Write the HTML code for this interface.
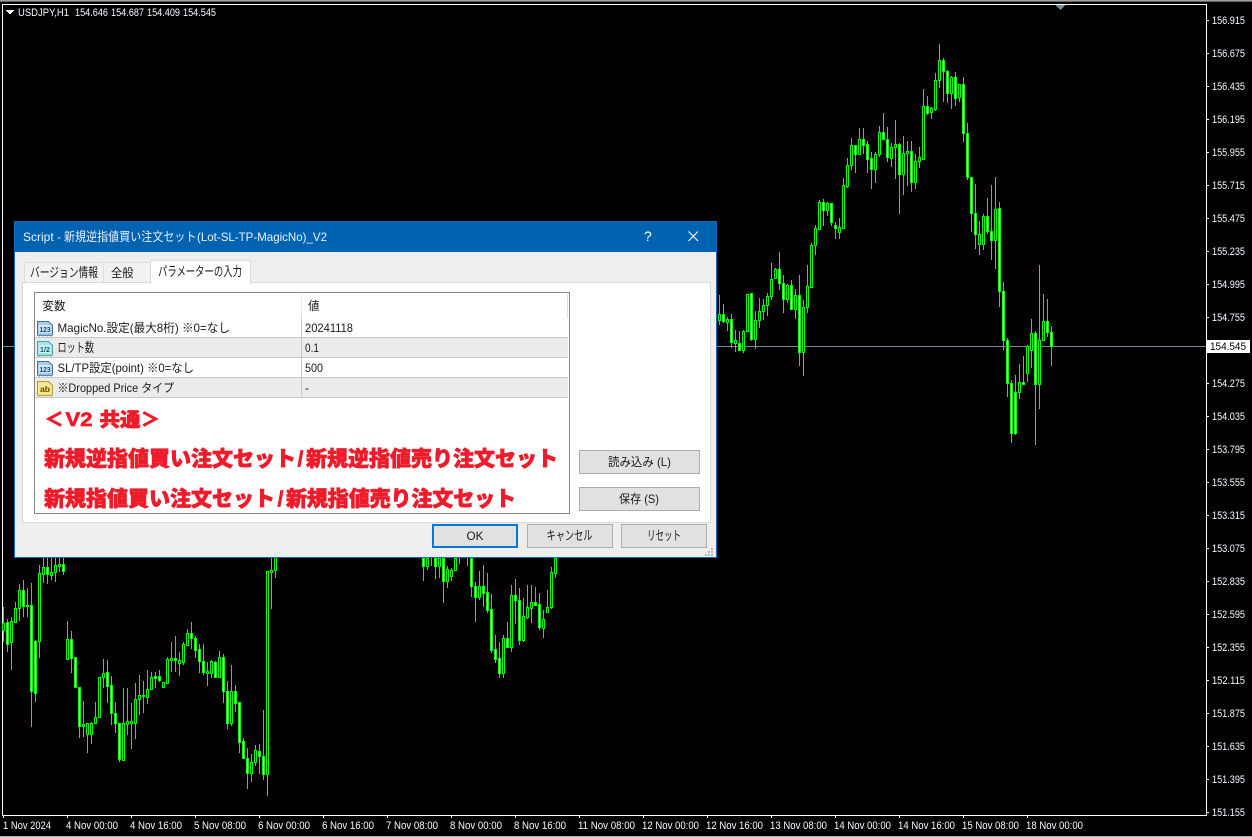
<!DOCTYPE html>
<html><head><meta charset="utf-8"><style>
html,body{margin:0;padding:0;background:#000;width:1252px;height:837px;overflow:hidden}
svg{position:absolute;left:0;top:0;display:block}
text{font-family:"Liberation Sans","Noto Sans CJK JP",sans-serif;white-space:pre}
.d{position:absolute;box-sizing:border-box}
.b{position:absolute;box-sizing:border-box;background:#e1e1e1;border:1px solid #adadad}
.t{font-size:12px;fill:#1a1a1a}
.k{font-size:13px;fill:#1a1a1a}
.a{font-size:11px;fill:#f8fbff}
.r{font-size:21px;font-weight:900;fill:#ee1c2b;stroke:#ee1c2b;stroke-width:.7px}
</style></head><body>
<svg width="1252" height="837" viewBox="0 0 1252 837">
<g shape-rendering="crispEdges">
<rect x="0" y="0" width="1252" height="1" fill="#a0a0a0"/><rect x="0" y="1" width="1252" height="1" fill="#666"/>
<rect x="0" y="836" width="1252" height="1" fill="#b0b0b0"/>
<rect x="2" y="4" width="1205" height="1" fill="#fff"/>
<rect x="2" y="4" width="1" height="812" fill="#fff"/>
<rect x="1206" y="4" width="1" height="812" fill="#fff"/>
<rect x="2" y="815" width="1205" height="1" fill="#fff"/>
<rect x="3" y="346" width="1203" height="1" fill="#778899"/>
<g id="ticks" fill="#fff"></g>
<g id="candles"></g>
<path d="M1056 5h9v1h-1v1h-1v1h-1v1h-1v1h-1v-1h-1v-1h-1v-1h-1v-1h-1z" fill="#778899"/>
<path d="M6 10h8v1h-1v1h-1v1h-1v1h-2v-1h-1v-1h-1v-1h-1z" fill="#fff"/>
<rect x="1207" y="340" width="43" height="13" fill="#fff"/>
</g>
<text class="a" x="18" y="16" textLength="51" lengthAdjust="spacingAndGlyphs">USDJPY,H1</text>
<text class="a" x="75" y="16" textLength="33" lengthAdjust="spacingAndGlyphs">154.646</text>
<text class="a" x="111" y="16" textLength="33" lengthAdjust="spacingAndGlyphs">154.687</text>
<text class="a" x="147" y="16" textLength="33" lengthAdjust="spacingAndGlyphs">154.409</text>
<text class="a" x="183" y="16" textLength="33" lengthAdjust="spacingAndGlyphs">154.545</text>
<g class="px">
<text class="a" x="1212" y="24" textLength="33" lengthAdjust="spacingAndGlyphs">156.915</text>
<text class="a" x="1212" y="57" textLength="33" lengthAdjust="spacingAndGlyphs">156.675</text>
<text class="a" x="1212" y="90" textLength="33" lengthAdjust="spacingAndGlyphs">156.435</text>
<text class="a" x="1212" y="123" textLength="33" lengthAdjust="spacingAndGlyphs">156.195</text>
<text class="a" x="1212" y="156" textLength="33" lengthAdjust="spacingAndGlyphs">155.955</text>
<text class="a" x="1212" y="189" textLength="33" lengthAdjust="spacingAndGlyphs">155.715</text>
<text class="a" x="1212" y="222" textLength="33" lengthAdjust="spacingAndGlyphs">155.475</text>
<text class="a" x="1212" y="255" textLength="33" lengthAdjust="spacingAndGlyphs">155.235</text>
<text class="a" x="1212" y="288" textLength="33" lengthAdjust="spacingAndGlyphs">154.995</text>
<text class="a" x="1212" y="321" textLength="33" lengthAdjust="spacingAndGlyphs">154.755</text>
<text class="a" x="1212" y="387" textLength="33" lengthAdjust="spacingAndGlyphs">154.275</text>
<text class="a" x="1212" y="420" textLength="33" lengthAdjust="spacingAndGlyphs">154.035</text>
<text class="a" x="1212" y="453" textLength="33" lengthAdjust="spacingAndGlyphs">153.795</text>
<text class="a" x="1212" y="486" textLength="33" lengthAdjust="spacingAndGlyphs">153.555</text>
<text class="a" x="1212" y="519" textLength="33" lengthAdjust="spacingAndGlyphs">153.315</text>
<text class="a" x="1212" y="552" textLength="33" lengthAdjust="spacingAndGlyphs">153.075</text>
<text class="a" x="1212" y="585" textLength="33" lengthAdjust="spacingAndGlyphs">152.835</text>
<text class="a" x="1212" y="618" textLength="33" lengthAdjust="spacingAndGlyphs">152.595</text>
<text class="a" x="1212" y="651" textLength="33" lengthAdjust="spacingAndGlyphs">152.355</text>
<text class="a" x="1212" y="684" textLength="33" lengthAdjust="spacingAndGlyphs">152.115</text>
<text class="a" x="1212" y="717" textLength="33" lengthAdjust="spacingAndGlyphs">151.875</text>
<text class="a" x="1212" y="750" textLength="33" lengthAdjust="spacingAndGlyphs">151.635</text>
<text class="a" x="1212" y="783" textLength="33" lengthAdjust="spacingAndGlyphs">151.395</text>
<text class="a" x="1212" y="816" textLength="33" lengthAdjust="spacingAndGlyphs">151.155</text>
<text x="1210" y="350" font-size="11" fill="#000" textLength="36" lengthAdjust="spacingAndGlyphs">154.545</text>
</g>
<text class="a" x="3" y="829" textLength="48" lengthAdjust="spacingAndGlyphs">1 Nov 2024</text>
<text class="a" x="66" y="829" textLength="52" lengthAdjust="spacingAndGlyphs">4 Nov 00:00</text>
<text class="a" x="130" y="829" textLength="52" lengthAdjust="spacingAndGlyphs">4 Nov 16:00</text>
<text class="a" x="194" y="829" textLength="52" lengthAdjust="spacingAndGlyphs">5 Nov 08:00</text>
<text class="a" x="258" y="829" textLength="52" lengthAdjust="spacingAndGlyphs">6 Nov 00:00</text>
<text class="a" x="322" y="829" textLength="52" lengthAdjust="spacingAndGlyphs">6 Nov 16:00</text>
<text class="a" x="386" y="829" textLength="52" lengthAdjust="spacingAndGlyphs">7 Nov 08:00</text>
<text class="a" x="450" y="829" textLength="52" lengthAdjust="spacingAndGlyphs">8 Nov 00:00</text>
<text class="a" x="514" y="829" textLength="52" lengthAdjust="spacingAndGlyphs">8 Nov 16:00</text>
<text class="a" x="578" y="829" textLength="57" lengthAdjust="spacingAndGlyphs">11 Nov 08:00</text>
<text class="a" x="642" y="829" textLength="57" lengthAdjust="spacingAndGlyphs">12 Nov 00:00</text>
<text class="a" x="706" y="829" textLength="57" lengthAdjust="spacingAndGlyphs">12 Nov 16:00</text>
<text class="a" x="770" y="829" textLength="57" lengthAdjust="spacingAndGlyphs">13 Nov 08:00</text>
<text class="a" x="834" y="829" textLength="57" lengthAdjust="spacingAndGlyphs">14 Nov 00:00</text>
<text class="a" x="898" y="829" textLength="57" lengthAdjust="spacingAndGlyphs">14 Nov 16:00</text>
<text class="a" x="962" y="829" textLength="57" lengthAdjust="spacingAndGlyphs">15 Nov 08:00</text>
<text class="a" x="1026" y="829" textLength="57" lengthAdjust="spacingAndGlyphs">18 Nov 00:00</text>
</svg>

<!-- dialog -->
<div class="d" style="left:14px;top:221px;width:703px;height:337px;background:#eeeeee;border:1px solid #0a6cc0"></div>
<div class="d" style="left:15px;top:222px;width:701px;height:30px;background:#0063b1"></div>
<div class="d" style="left:24px;top:262px;width:80px;height:22px;background:#f2f2f2;border:1px solid #dcdcdc"></div>
<div class="d" style="left:103px;top:262px;width:48px;height:22px;background:#f2f2f2;border:1px solid #dcdcdc"></div>
<div class="d" style="left:22px;top:282px;width:689px;height:241px;background:#fff;border:1px solid #d9d9d9"></div>
<div class="d" style="left:150px;top:260px;width:101px;height:24px;background:#fff;border:1px solid #d9d9d9;border-bottom:0"></div>
<div class="d" style="left:34px;top:292px;width:536px;height:222px;background:#fff;border:1px solid #858585"></div>
<div class="d" style="left:35px;top:337px;width:533px;height:1px;background:#c8c8c8"></div>
<div class="d" style="left:35px;top:338px;width:533px;height:19px;background:#ebebeb"></div>
<div class="d" style="left:35px;top:357px;width:533px;height:1px;background:#c8c8c8"></div>
<div class="d" style="left:35px;top:377px;width:533px;height:1px;background:#c8c8c8"></div>
<div class="d" style="left:35px;top:378px;width:533px;height:19px;background:#ebebeb"></div>
<div class="d" style="left:35px;top:397px;width:533px;height:1px;background:#c8c8c8"></div>
<div class="d" style="left:301px;top:318px;width:1px;height:80px;background:#c8c8c8"></div>
<div class="d" style="left:301px;top:294px;width:1px;height:24px;background:#e8e8e8"></div>
<div class="d" style="left:567px;top:294px;width:1px;height:24px;background:#e0e0e0"></div>
<div class="b" style="left:579px;top:450px;width:121px;height:24px"></div>
<div class="b" style="left:579px;top:487px;width:121px;height:24px"></div>
<div class="b" style="left:432px;top:524px;width:86px;height:24px;border:2px solid #0078d7"></div>
<div class="b" style="left:527px;top:524px;width:86px;height:24px"></div>
<div class="b" style="left:621px;top:524px;width:86px;height:24px"></div>

<svg width="1252" height="837" viewBox="0 0 1252 837">
<text x="23" y="241" font-size="12" fill="#e8f1fa" textLength="38" lengthAdjust="spacingAndGlyphs">Script -</text>
<text x="64" y="241" font-size="12.500" fill="#e8f1fa" textLength="132.500" lengthAdjust="spacingAndGlyphs">新規逆指値買い注文セット</text>
<text x="197" y="241" font-size="12" fill="#e8f1fa" textLength="130" lengthAdjust="spacingAndGlyphs">(Lot-SL-TP-MagicNo)_V2</text>
<text x="644" y="241" font-size="14" fill="#fff">?</text>
<path d="M688.5 231.5l9.5 9.5M698 231.5l-9.5 9.5" stroke="#fff" stroke-width="1.1" fill="none"/>
<text class="k" x="30" y="277" textLength="68" lengthAdjust="spacingAndGlyphs">バージョン情報</text>
<text class="t" x="111" y="277" textLength="22.500" lengthAdjust="spacingAndGlyphs">全般</text>
<text class="k" x="158" y="276" textLength="84" lengthAdjust="spacingAndGlyphs">パラメーターの入力</text>
<text class="t" x="42.500" y="310" textLength="23" lengthAdjust="spacingAndGlyphs">変数</text>
<text class="t" x="308" y="310" textLength="11.500" lengthAdjust="spacingAndGlyphs">値</text>
<text class="t" x="57.500" y="332" textLength="172.500" lengthAdjust="spacingAndGlyphs">MagicNo.設定(最大8桁) ※0=なし</text>
<text class="t" x="305" y="332" textLength="48" lengthAdjust="spacingAndGlyphs">20241118</text>
<text class="k" x="57.500" y="352" textLength="36.500" lengthAdjust="spacingAndGlyphs">ロット数</text>
<text class="t" x="305" y="352" textLength="14" lengthAdjust="spacingAndGlyphs">0.1</text>
<text class="t" x="57.500" y="372" textLength="136.500" lengthAdjust="spacingAndGlyphs">SL/TP設定(point) ※0=なし</text>
<text class="t" x="305" y="372" textLength="18" lengthAdjust="spacingAndGlyphs">500</text>
<text class="t" x="57.500" y="392" textLength="116.500" lengthAdjust="spacingAndGlyphs">※Dropped Price タイプ</text>
<text class="t" x="305" y="392">-</text>

<g><path d="M37.500 321.500h11l4 4v9l-1.500 1.500-2-1-2 1-2-1-2 1-2-1-2 1-1.500-1z" fill="#a9cbee" stroke="#3d74ad"/><rect x="39" y="325" width="12" height="8" fill="#d4e6f8"/><text x="45" y="332" font-size="7.500" font-weight="700" fill="#17406f" text-anchor="middle" textLength="11" lengthAdjust="spacingAndGlyphs">123</text></g>
<g><path d="M37.500 341.500h11l4 4v9l-1.500 1.500-2-1-2 1-2-1-2 1-2-1-2 1-1.500-1z" fill="#a8e4e6" stroke="#4a9fae"/><rect x="39" y="345" width="12" height="8" fill="#c9f0f2"/><text x="45" y="352" font-size="7.500" font-weight="700" fill="#17506f" text-anchor="middle" textLength="10" lengthAdjust="spacingAndGlyphs">1/2</text></g>
<g><path d="M37.500 361.500h11l4 4v9l-1.500 1.500-2-1-2 1-2-1-2 1-2-1-2 1-1.500-1z" fill="#a9cbee" stroke="#3d74ad"/><rect x="39" y="365" width="12" height="8" fill="#d4e6f8"/><text x="45" y="372" font-size="7.500" font-weight="700" fill="#17406f" text-anchor="middle" textLength="11" lengthAdjust="spacingAndGlyphs">123</text></g>
<g><path d="M37.500 381.500h11l4 4v9l-1.500 1.500-2-1-2 1-2-1-2 1-2-1-2 1-1.500-1z" fill="#f4e58e" stroke="#b49a36"/><text x="45" y="392" font-size="8.500" font-weight="700" fill="#5d4a00" text-anchor="middle" textLength="10" lengthAdjust="spacingAndGlyphs">ab</text></g>

<text class="r" x="44.500" y="426" style="font-size:19px">＜</text>
<text class="r" x="65.500" y="426" style="font-size:19px" textLength="27" lengthAdjust="spacingAndGlyphs">V2</text>
<text class="r" x="99.500" y="426" style="font-size:19px" textLength="41" lengthAdjust="spacingAndGlyphs">共通</text>
<text class="r" x="141" y="426" style="font-size:19px">＞</text>
<text class="r" x="44" y="466" textLength="252" lengthAdjust="spacing">新規逆指値買い注文セット</text>
<text class="r" x="297.500" y="466">/</text>
<text class="r" x="306" y="466" textLength="252" lengthAdjust="spacing">新規逆指値売り注文セット</text>
<text class="r" x="44" y="506" textLength="231" lengthAdjust="spacing">新規指値買い注文セット</text>
<text class="r" x="277.500" y="506">/</text>
<text class="r" x="286" y="506" textLength="230" lengthAdjust="spacing">新規指値売り注文セット</text>

<text class="t" x="608" y="466" textLength="63" lengthAdjust="spacingAndGlyphs">読み込み (L)</text>
<text class="t" x="619" y="503" textLength="40" lengthAdjust="spacingAndGlyphs">保存 (S)</text>
<text class="t" x="466.500" y="540" textLength="17" lengthAdjust="spacingAndGlyphs">OK</text>
<text class="k" x="546.500" y="540" textLength="46" lengthAdjust="spacingAndGlyphs">キャンセル</text>
<text class="k" x="647" y="540" textLength="34" lengthAdjust="spacingAndGlyphs">リセット</text>
<g fill="#b8b8b8" shape-rendering="crispEdges"><rect x="711" y="548" width="2" height="2"/><rect x="708" y="551" width="2" height="2"/><rect x="711" y="551" width="2" height="2"/><rect x="705" y="554" width="2" height="2"/><rect x="708" y="554" width="2" height="2"/><rect x="711" y="554" width="2" height="2"/></g>
</svg>

<script>
var A=[[346,586,675,595,645,0],[358,510,600,517,596,0],[370,507,588,517,539,1],[382,516,558,520,539,0],[394,520,588,520,575,1],[406,575,627,584,593,1],[418,564,627,592,605,0],[430,445,595,466,593,0],[442,385,473,406,467,0],[454,324,420,346,406,0],[466,346,429,346,373,1],[478,294,375,328,373,0],[490,294,372,328,344,1],[502,334,429,343,386,1],[514,366,477,385,418,1],[526,366,459,373,418,0],[538,289,381,307,373,0],[550,249,330,307,328,1],[562,292,396,328,382,1],[574,339,411,352,383,0],[586,270,447,343,352,0],[598,340,552,343,433,1],[610,319,495,370,433,0],[622,334,468,364,370,0],[634,334,486,364,457,1],[646,373,477,394,457,0],[658,352,414,382,394,0],[670,178,390,229,386,0],[682,198,254,229,250,1],[694,232,266,235,245,0],[706,129,242,151,238,0],[718,42,174,91,151,0],[730,84,216,91,124,1],[742,120,219,124,190,1],[754,139,237,142,190,0],[766,126,228,142,205,1],[778,163,216,163,202,0],[790,141,336,163,310,1],[802,280,450,310,442,1],[814,442,607,442,550,1],[826,462,657,550,613,1],[838,574,675,613,641,0],[850,553,660,559,641,0],[862,504,612,559,603,1],[874,465,690,604,630,1],[886,442,717,538,630,0],[898,517,831,535,784,1]];
var B=[[58,165,255,223,241,0],[70,192,250,223,244,1],[82,232,273,237,245,0],[94,222,324,238,307,1],[106,270,336,301,308,0],[118,274,333,310,331,1],[130,270,339,274,331,0],[142,162,277,163,274,0],[154,160,303,160,298,1],[166,213,327,241,298,0],[178,175,264,214,241,0],[190,178,241,196,214,0],[202,160,228,169,196,0],[214,70,180,118,169,0],[226,84,118,88,115,0],[238,37,150,88,130,1],[250,106,219,130,178,1],[262,132,189,136,178,0],[274,121,211,136,208,1],[286,148,237,166,208,0],[298,106,378,166,337,1],[310,181,408,202,337,0],[322,75,219,139,202,0],[334,10,144,16,140,0],[910,126,330,154,301,1],[922,295,471,301,430,1],[934,420,609,430,580,1],[946,405,585,457,580,1],[958,372,477,427,457,0],[970,348,431,427,431,1],[982,315,426,319,400,0],[994,237,384,280,331,0],[1006,273,615,280,433,1],[1018,75,507,301,433,0],[1030,163,304,244,301,0],[1042,178,291,244,277,1],[1054,259,378,277,319,1]];
var C=[[10,155,262,204,226,0],[22,192,292,202,266,1],[34,186,345,199,260,0],[46,140,205,160,200,0],[58,88,198,106,160,0],[70,76,185,106,152,1],[82,100,187,149,152,1],[94,84,516,149,409,1],[106,255,441,257,413,1],[118,30,309,55,257,0],[130,0,85,37,57,0],[142,0,87,37,58,1],[154,0,75,52,59,0],[166,0,80,31,52,0],[178,0,52,28,32,0],[190,0,60,28,47,1],[202,198,315,253,312,0],[214,228,354,253,308,1],[226,306,398,307,397,1],[238,395,549,397,514,1],[250,438,545,506,514,0],[262,505,594,505,536,0],[274,500,567,503,536,0],[286,441,505,487,503,0],[298,365,490,367,487,0],[310,312,398,355,367,0],[322,316,444,352,392,1],[334,362,511,391,475,1],[346,441,534,475,505,1],[358,504,620,505,613,1],[370,400,617,505,615,0],[382,400,540,497,506,0],[394,445,582,497,503,0],[406,385,552,431,503,0],[418,360,480,419,431,0],[430,378,473,419,423,0],[442,346,447,403,425,0],[454,352,405,367,401,0],[466,352,398,364,369,1],[478,345,380,364,376,1],[490,380,400,382,397,0],[502,306,388,313,385,0],[514,262,352,310,314,0],[526,243,350,310,314,1],[538,290,363,316,323,0],[550,262,330,268,322,0],[562,222,270,235,269,0],[574,202,282,235,250,1],[586,243,310,250,284,1],[598,268,355,283,317,1],[610,266,360,317,350,1],[622,322,393,349,353,0],[634,314,370,319,353,0],[646,319,368,322,365,1],[658,289,370,305,366,0],[670,297,445,305,409,1],[682,378,522,409,503,1],[694,330,512,409,503,0],[706,389,470,409,443,1],[718,442,595,442,560,1],[730,549,612,559,610,1],[742,580,702,610,653,1],[754,598,680,622,653,0],[766,569,632,586,622,0],[778,568,658,589,602,1],[790,465,676,602,658,1],[802,48,722,48,658,0],[814,0,162,45,50,0],[826,0,68,0,45,0]];
var D=[[40,24,93,24,47,1],[52,24,60,24,47,0],[64,24,48,24,24,0],[76,24,87,24,47,1],[88,24,84,24,47,0],[100,24,159,24,93,1],[112,48,114,57,93,0],[124,54,93,59,78,0],[136,24,63,24,59,0],[148,24,42,24,24,0],[172,24,48,24,24,0],[184,24,141,24,107,1],[196,96,216,107,141,1],[208,63,150,108,141,0],[220,45,171,108,129,1],[232,69,189,126,180,1],[244,132,309,177,300,1],[256,255,339,297,327,1],[268,276,384,324,369,1],[280,255,384,264,369,0],[292,216,291,264,291,1],[304,105,306,135,291,0],[316,87,222,135,150,1],[328,114,285,150,270,1],[340,144,276,198,270,0],[352,105,207,171,201,0],[364,105,219,156,174,0],[376,111,168,156,165,1],[388,129,240,162,231,1],[400,180,264,207,234,0],[412,120,186,171,186,0],[424,51,177,66,171,0],[436,24,84,24,69,0]];
var s='';
function R(x,y,w,h,c){s+='<rect x="'+x+'" y="'+y+'" width="'+w+'" height="'+h+'" fill="'+c+'"/>';}
function P(ox,oy,L){L.forEach(function(k){
 var x=Math.floor(ox+k[0]/3+0.01),f=function(v){return Math.round(oy+v/3);};
 var wt=f(k[1]),wb=f(k[2]),bt=f(k[3]),bb=f(k[4]);
 R(x,wt,1,Math.max(1,wb-wt),'#00ff00');
 if(bb>bt||k[3]!==k[4]){var h=Math.max(2,bb-bt+1);
  R(x-1,bt,3,h,'#00ff00');
  if(h>2)R(x,bt+1,1,h-2,k[5]?'#ffffff':'#000000');
 }
});}
P(700,30,A);P(700,240,B);P(0,555,C);P(410,550,D);
document.getElementById('candles').innerHTML=s;
var t='';
for(var i=0;i<25;i++){t+='<rect x="1207" y="'+(20+33*i)+'" width="2" height="1"/>';}
for(var j=0;j<17;j++){t+='<rect x="'+(3+64*j)+'" y="816" width="1" height="2"/>';}
document.getElementById('ticks').innerHTML=t;
</script>
</body></html>
